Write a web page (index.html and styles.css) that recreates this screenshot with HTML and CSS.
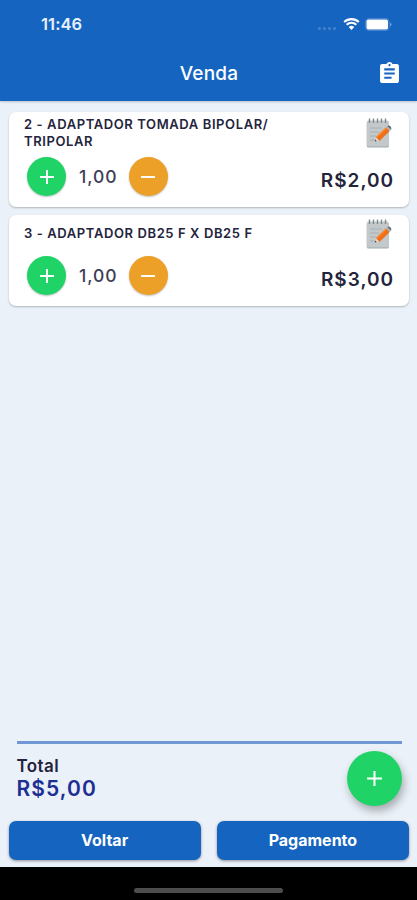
FILE: index.html
```html
<!DOCTYPE html>
<html lang="pt-BR">
<head>
  <meta charset="UTF-8" />
  <meta name="viewport" content="width=device-width, initial-scale=1.0"/>
  <title>Venda</title>
  <link rel="stylesheet" href="styles.css">
</head>
<body>
  <!-- shared icons -->
  <svg class="sprite" aria-hidden="true">
    <symbol id="plus" viewBox="0 0 16 16">
      <path d="M8 1v14M1 8h14" fill="none" stroke="#fff" stroke-width="1.9"/>
    </symbol>
    <symbol id="minus" viewBox="0 0 16 16">
      <path d="M1 8h14" fill="none" stroke="#fff" stroke-width="1.9"/>
    </symbol>
    <symbol id="note" viewBox="0 0 26 32">
      <rect x="0.8" y="4.5" width="22" height="26" rx="1.5" fill="#9fa9ad"/>
      <rect x="0.8" y="3.5" width="22" height="26" rx="1.5" fill="#c3c9cb"/>
      <path d="M3.5 6V1.500M7.500 6V1.500M11.500 6V1.500M15.500 6V1.500M19.500 6V1.500" stroke="#7d888d" stroke-width="1.4" fill="none"/>
      <path d="M4 11h12M4 15h9M4 19h6M4 23h5" stroke="#a6b0b4" stroke-width="1" fill="none"/>
      <path d="M8.800 24.500l1.200-4.500 3.500 3.500z" fill="#e8dccb"/>
      <path d="M8.800 24.500l.5-1.900 1.500 1.400z" fill="#333b45"/>
      <path d="M9.900 20.100L20 10.300l3.700 3.700-10.200 9.900z" fill="#ef7018"/>
      <path d="M9.900 20.100L20 10.300l.9.900-10.200 9.800z" fill="#f98d38"/>
      <path d="M20 10.300l1.400-1.300 3.700 3.700-1.400 1.300z" fill="#aab4b9"/>
      <path d="M21.400 9q1.500-1.300 3 .2t.7 3.500z" fill="#59676e"/>
    </symbol>
  </svg>

  <header class="header">
    <div class="status-bar">
      <span class="time">11:46</span>
      <div class="status-icons">
        <span class="signal"><i></i><i></i><i></i><i></i></span>
        <svg class="wifi" viewBox="0 0 17 12">
          <path d="M1.2 4.1a10.4 10.4 0 0 1 14.6 0M3.7 6.8a6.8 6.8 0 0 1 9.6 0" fill="none" stroke="#fff" stroke-width="2.1"/>
          <path d="M8.5 12L5.7 9.1a4 4 0 0 1 5.6 0z" fill="#fff"/>
        </svg>
        <svg class="battery" viewBox="0 0 27 13">
          <rect x="0.5" y="0.5" width="23.5" height="12" rx="3" fill="none" stroke="#4782cf"/>
          <rect x="1.5" y="1.5" width="21.5" height="10" rx="1.8" fill="#fff"/>
          <path d="M25 4.5q1.5.6 1.5 2t-1.5 2z" fill="#6f9ddb"/>
        </svg>
      </div>
    </div>
    <div class="title-bar">
      <h1>Venda</h1>
      <svg class="clipboard" viewBox="3 1 18 20">
        <path d="M19 3h-4.180C14.400 1.840 13.300 1 12 1s-2.400.84-2.820 2H5c-1.100 0-2 .9-2 2v14c0 1.100.9 2 2 2h14c1.100 0 2-.9 2-2V5c0-1.100-.9-2-2-2zm-7 0c.55 0 1 .45 1 1s-.45 1-1 1-1-.45-1-1 .45-1 1-1zm2 14H7v-2h7v2zm3-4H7v-2h10v2zm0-4H7V7h10v2z" fill="#fff"/>
      </svg>
    </div>
  </header>

  <main class="items">
    <div class="item">
      <div class="item-top">
        <h2>2 - ADAPTADOR TOMADA BIPOLAR/<br>TRIPOLAR</h2>
        <svg class="note"><use href="#note"/></svg>
      </div>
      <div class="item-bottom">
        <button class="round green"><svg><use href="#plus"/></svg></button>
        <span class="qty">1,00</span>
        <button class="round orange"><svg><use href="#minus"/></svg></button>
        <span class="price">R$2,00</span>
      </div>
    </div>
    <div class="item short">
      <div class="item-top">
        <h2>3 - ADAPTADOR DB25 F X DB25 F</h2>
        <svg class="note"><use href="#note"/></svg>
      </div>
      <div class="item-bottom">
        <button class="round green"><svg><use href="#plus"/></svg></button>
        <span class="qty">1,00</span>
        <button class="round orange"><svg><use href="#minus"/></svg></button>
        <span class="price">R$3,00</span>
      </div>
    </div>
  </main>

  <footer class="footer">
    <div class="summary">
      <div class="total">
        <span class="total-label">Total</span>
        <span class="total-value">R$5,00</span>
      </div>
      <button class="round green add"><svg><use href="#plus"/></svg></button>
    </div>
    <div class="actions">
      <button class="action">Voltar</button>
      <button class="action">Pagamento</button>
    </div>
  </footer>
  <div class="home-bar"><span></span></div>
</body>
</html>
```
FILE: styles.css
```css
:root {
  --blue: #1565c0;
  --green: #20d366;
  --orange: #eda028;
  --background: #ebf1f9;
  --text-dark: #24243c;
}

* {
  box-sizing: border-box;
  margin: 0;
  padding: 0;
}

body {
  font-family: Inter, Roboto, sans-serif;
  background-color: var(--background);
  color: var(--text-dark);
  display: flex;
  flex-direction: column;
  height: 900px;
  overflow: hidden;
}

svg {
  display: block;
}

.sprite {
  position: absolute;
  width: 0;
  height: 0;
}

button {
  border: none;
  font-family: inherit;
  cursor: pointer;
}

.header {
  background-color: var(--blue);
  color: #fff;
  height: 101px;
  box-shadow: 0 1px 2px rgba(0, 0, 0, 0.2);
}

.status-bar {
  display: flex;
  justify-content: space-between;
  align-items: center;
  height: 48px;
  padding: 0 25px 0 41px;
}

.time {
  font-size: 16.5px;
  font-weight: 600;
  letter-spacing: 0.1px;
  color: #e8f1fc;
}

.status-icons {
  display: flex;
  align-items: center;
}

.signal {
  display: flex;
  gap: 2px;
  margin: 8px 7px 0 0;
}

.signal i {
  width: 3px;
  height: 3px;
  border-radius: 50%;
  background-color: #4782cf;
}

.wifi {
  width: 17px;
  height: 12px;
  margin-right: 5px;
}

.battery {
  width: 27px;
  height: 13px;
}

.title-bar {
  display: grid;
  grid-template-columns: 19px 1fr 19px;
  align-items: center;
  height: 50px;
  padding: 0 18px 0 19px;
}

.title-bar h1 {
  grid-column: 2;
  text-align: center;
  font-size: 19px;
  font-weight: 500;
  letter-spacing: 0.2px;
}

.clipboard {
  width: 19px;
  height: 21px;
  margin-top: -2px;
}

.items {
  flex: 1;
  display: flex;
  flex-direction: column;
  gap: 8px;
  padding: 11px 8px 0 9px;
}

.item {
  display: flex;
  flex-direction: column;
  justify-content: space-between;
  height: 95px;
  padding: 4px 15px 11px 15px;
  background-color: #fff;
  border-radius: 7px;
  box-shadow: 0 1px 2px rgba(0, 0, 0, 0.25);
}

.item.short {
  height: 91px;
}

.item-top {
  display: flex;
  justify-content: space-between;
  height: 34px;
}

.item-top h2 {
  font-size: 13px;
  line-height: 16.5px;
  font-weight: 600;
  letter-spacing: 0.6px;
  white-space: nowrap;
}

.short .item-top h2 {
  padding-top: 6px;
}

.note {
  width: 26px;
  height: 32px;
  margin: 1px 2px 0 0;
}

.short .note {
  margin-top: -1px;
}

.item-bottom {
  display: flex;
  align-items: center;
  padding-left: 3.4px;
}

.round {
  display: flex;
  justify-content: center;
  align-items: center;
  width: 39px;
  height: 39px;
  border-radius: 50%;
  box-shadow: 0 1px 2px rgba(0, 0, 0, 0.25);
}

.round svg {
  width: 16px;
  height: 16px;
}

.green {
  background-color: var(--green);
}

.orange {
  background-color: var(--orange);
}

.qty {
  width: 62.6px;
  padding-left: 1px;
  text-align: center;
  font-size: 17.5px;
  font-weight: 500;
  letter-spacing: 0.9px;
  color: #3d3d55;
}

.price {
  margin: 8px 0 0 auto;
  font-size: 19px;
  font-weight: 600;
  letter-spacing: 1px;
}

.footer {
  padding: 0 8px 7px 8.5px;
}

.summary {
  display: flex;
  justify-content: space-between;
  height: 80px;
  margin: 0 7px 0 8px;
  border-top: 3px solid #6e97d3;
}

.total {
  display: flex;
  flex-direction: column;
  padding-top: 11px;
}

.total-label {
  font-size: 17px;
  line-height: 22px;
  font-weight: 600;
  letter-spacing: 0.4px;
}

.total-value {
  font-size: 21px;
  line-height: 24px;
  font-weight: 600;
  letter-spacing: 1.1px;
  color: #1d2f93;
}

.add {
  width: 55px;
  height: 55px;
  margin-top: 7px;
  box-shadow: 2px 5px 8px rgba(0, 0, 0, 0.3);
}

.add svg {
  width: 17px;
  height: 17px;
}

.actions {
  display: grid;
  grid-template-columns: 1fr 1fr;
  gap: 16px;
}

.action {
  height: 39px;
  padding-bottom: 1px;
  background-color: var(--blue);
  color: #fff;
  border-radius: 7px;
  font-size: 16px;
  font-weight: 700;
  box-shadow: 0 1px 3px rgba(0, 0, 0, 0.4);
}

.home-bar {
  display: flex;
  justify-content: center;
  height: 33px;
  padding-top: 21px;
  background-color: #000;
}

.home-bar span {
  width: 149px;
  height: 5px;
  border-radius: 3px;
  background-color: #4d4d4d;
}
```
